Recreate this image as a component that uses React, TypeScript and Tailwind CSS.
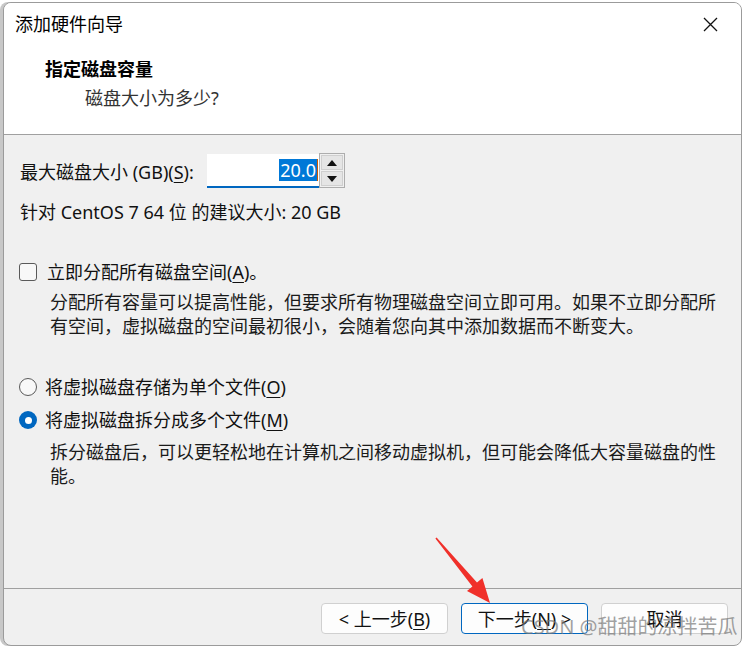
import React from "react";

const FONT = { fontFamily: '"Noto Sans", "Noto Sans CJK SC", sans-serif' } as React.CSSProperties;

function U({ children }: { children: React.ReactNode }) {
  return <span className="underline underline-offset-[3px] decoration-1">{children}</span>;
}

export default function App() {
  return (
    <div
      className="relative w-[746px] h-[647px] overflow-hidden bg-white text-[18px] text-[#111] pl-[3px] pt-[2px]"
      style={FONT}
    >
      <div className="flex flex-col w-[739px] h-[644px] rounded-[8px] border border-[#9b9b9b] overflow-hidden bg-[#f0f0f0] shadow-[-3px_0_0_0_#c8c8c8]">
        {/* title bar */}
        <div className="flex items-center justify-between h-[42px] shrink-0 bg-white pl-[11px] pr-[23px]">
          <span className="leading-[24px] text-black">添加硬件向导</span>
          <svg width="15" height="15" viewBox="0 0 15 15" className="mt-[1px]">
            <path d="M1 1 L14 14 M14 1 L1 14" stroke="#111" strokeWidth="1.3" fill="none" />
          </svg>
        </div>
        {/* header */}
        <div className="flex flex-col h-[90px] shrink-0 bg-white border-b border-[#a0a0a0] pt-[12px] pl-[41px]">
          <span className="font-bold leading-[24px] text-black">指定磁盘容量</span>
          <span className="mt-[5px] pl-[40px] leading-[24px] text-[#333]">磁盘大小为多少?</span>
        </div>
        {/* body */}
        <div className="flex flex-col flex-1 pl-[16px]">
          <div className="flex items-center h-[35px] mt-[18px]">
            <span className="w-[187px] leading-[24px] pt-[2px] whitespace-nowrap">
              最大磁盘大小 (GB)(<U>S</U>):
            </span>
            <div className="flex items-center justify-end w-[112px] h-[34px] bg-white border-b-2 border-[#0067c0] pr-[1px]">
              <span className="bg-[#0078d7] text-white leading-[22px] px-[1px]">20.0</span>
              <span className="w-[1px] h-[22px] bg-[#d05a00]" />
            </div>
            <div className="flex flex-col w-[26px] h-[35px] border border-[#adadad] bg-[#f0f0f0] p-[1px] gap-[1px]">
              <div className="flex flex-1 items-center justify-center bg-[#e5e5e5] border border-[#cfcfcf]">
                <svg width="10" height="6" viewBox="0 0 10 6"><path d="M5 0 L10 6 L0 6 Z" fill="#111" /></svg>
              </div>
              <div className="flex flex-1 items-center justify-center bg-[#e5e5e5] border border-[#cfcfcf]">
                <svg width="10" height="6" viewBox="0 0 10 6"><path d="M0 0 L10 0 L5 6 Z" fill="#111" /></svg>
              </div>
            </div>
          </div>
          <div className="mt-[12px] leading-[24px]">针对 CentOS 7 64 位 的建议大小: 20 GB</div>

          <div className="flex items-center mt-[36px] h-[24px] -ml-[1px]">
            <span className="w-[18px] h-[18px] rounded-[3px] border border-[#5a5a5a] bg-[#f8f8f8]" />
            <span className="ml-[10px] leading-[24px]">
              立即分配所有磁盘空间(<U>A</U>)。
            </span>
          </div>
          <p className="mt-[6px] pl-[30px] leading-[24px] whitespace-nowrap text-[#1a1a1a]">
            分配所有容量可以提高性能，但要求所有物理磁盘空间立即可用。如果不立即分配所
            <br />
            有空间，虚拟磁盘的空间最初很小，会随着您向其中添加数据而不断变大。
          </p>

          <div className="flex items-center mt-[37px] h-[24px] -ml-[1px]">
            <span className="w-[18px] h-[18px] rounded-full border border-[#5a5a5a] bg-[#f8f8f8]" />
            <span className="ml-[8px] leading-[24px]">
              将虚拟磁盘存储为单个文件(<U>O</U>)
            </span>
          </div>
          <div className="flex items-center mt-[9px] h-[24px] -ml-[1px]">
            <span className="flex items-center justify-center w-[18px] h-[18px] rounded-full bg-[#0067c0]">
              <span className="w-[7px] h-[7px] rounded-full bg-white" />
            </span>
            <span className="ml-[8px] leading-[24px]">
              将虚拟磁盘拆分成多个文件(<U>M</U>)
            </span>
          </div>
          <p className="mt-[8px] pl-[30px] leading-[24px] whitespace-nowrap text-[#1a1a1a]">
            拆分磁盘后，可以更轻松地在计算机之间移动虚拟机，但可能会降低大容量磁盘的性
            <br />
            能。
          </p>
        </div>
        {/* footer */}
        <div className="flex justify-end gap-[13px] h-[57px] shrink-0 border-t border-[#a0a0a0] pt-[14px] pr-[13px]">
          <button className="w-[127px] h-[31px] rounded-[4px] border border-[#d0d0d0] bg-[#fdfdfd] leading-[24px] text-[#111]">
            &lt; 上一步(<U>B</U>)
          </button>
          <button className="w-[127px] h-[31px] rounded-[4px] border border-[#0067c0] bg-[#fdfdfd] leading-[24px] text-[#111]">
            下一步(<U>N</U>) &gt;
          </button>
          <button className="w-[127px] h-[31px] rounded-[4px] border border-[#d0d0d0] bg-[#fdfdfd] leading-[24px] text-[#111]">
            取消
          </button>
        </div>
      </div>

      {/* red annotation arrow */}
      <svg className="absolute left-0 top-0 pointer-events-none" width="746" height="647">
        <polygon
          points="435.4,538.5 472.4,586.4 467,590.9 490,603 482.4,578.1 477,582.6 436.6,537.5"
          fill="#f0302a"
        />
      </svg>

      {/* watermark */}
      <span className="absolute left-[521px] top-[613px] text-[20px] leading-[28px] text-[rgba(120,120,120,0.7)] pointer-events-none">
        CSDN @甜甜的凉拌苦瓜
      </span>
    </div>
  );
}
